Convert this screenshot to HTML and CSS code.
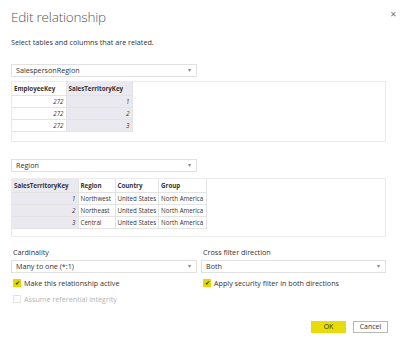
FILE: index.html
```html
<!DOCTYPE html>
<html>
<head lang="en">
    <meta charset="UTF-8">
    <title>Edit relationship</title>
    <link rel="stylesheet" href="styles.css">
</head>
<body>

<div class="dialog">
    <a class="close-btn" href="javascript:void(0);">&#x2715;</a>

    <h1 class="dialog-title">Edit relationship</h1>
    <p class="dialog-sub">Select tables and columns that are related.</p>

    <!--第一个表-->
    <div class="select select-half first-select">
        <span>SalespersonRegion</span><span class="arrow">&#x25BE;</span>
    </div>
    <div class="grid-box box-one">
        <table class="grid">
            <tr>
                <th class="w-emp">EmployeeKey</th>
                <th class="w-key picked">SalesTerritoryKey</th>
            </tr>
            <tr><td class="num">272</td><td class="num picked">1</td></tr>
            <tr><td class="num">272</td><td class="num picked">2</td></tr>
            <tr><td class="num">272</td><td class="num picked">3</td></tr>
        </table>
    </div>

    <!--第二个表-->
    <div class="select select-half second-select">
        <span>Region</span><span class="arrow">&#x25BE;</span>
    </div>
    <div class="grid-box box-two">
        <table class="grid">
            <tr>
                <th class="w-key2 picked">SalesTerritoryKey</th>
                <th class="w-region">Region</th>
                <th class="w-country">Country</th>
                <th class="w-group">Group</th>
            </tr>
            <tr><td class="num picked">1</td><td>Northwest</td><td>United States</td><td>North America</td></tr>
            <tr><td class="num picked">2</td><td>Northeast</td><td>United States</td><td>North America</td></tr>
            <tr><td class="num picked">3</td><td>Central</td><td>United States</td><td>North America</td></tr>
        </table>
    </div>

    <!--选项-->
    <div class="options">
        <div class="opt-col">
            <label class="opt-label">Cardinality</label>
            <div class="select">
                <span>Many to one (*:1)</span><span class="arrow">&#x25BE;</span>
            </div>
            <div class="check-row">
                <span class="check on">&#x2714;</span>Make this relationship active
            </div>
            <div class="check-row disabled">
                <span class="check"></span>Assume referential integrity
            </div>
        </div>
        <div class="opt-col">
            <label class="opt-label">Cross filter direction</label>
            <div class="select">
                <span>Both</span><span class="arrow">&#x25BE;</span>
            </div>
            <div class="check-row">
                <span class="check on">&#x2714;</span>Apply security filter in both directions
            </div>
        </div>
    </div>

    <div class="buttons">
        <a class="btn btn-ok" href="javascript:void(0);">OK</a>
        <a class="btn btn-cancel" href="javascript:void(0);">Cancel</a>
    </div>
</div>

</body>
</html>
```

FILE: styles.css
```css
* {
    padding: 0px;
    margin: 0px;
    box-sizing: border-box;
}

body {
    background: #ffffff;
    font-family: "Open Sans", "Noto Sans", sans-serif;
    font-size: 7.2px;
    color: #333333;
}

a {
    text-decoration: none;
    color: #333333;
}

.dialog {
    position: relative;
    width: 400px;
    height: 347px;
    padding: 0px 14px 0px 11px;
}

.close-btn {
    position: absolute;
    top: 2px;
    right: 3px;
    font-size: 8px;
    color: #777777;
}

.dialog-title {
    margin-top: 6px;
    height: 22px;
    line-height: 22px;
    font-size: 13.5px;
    font-weight: 300;
    letter-spacing: -0.2px;
    color: #555555;
}

.dialog-sub {
    margin-top: 9px;
    height: 10px;
    line-height: 10px;
}

.select {
    display: flex;
    justify-content: space-between;
    align-items: center;
    height: 13px;
    padding: 0px 5px 0px 4px;
    border: #e1e1e1 1px solid;
    background: #ffffff;
    line-height: 11px;
}

.select-half {
    width: 186px;
}

.arrow {
    font-size: 6px;
    color: #888888;
}

.first-select {
    margin-top: 17px;
}

.second-select {
    margin-top: 17px;
}

.grid-box {
    margin-top: 4px;
    border: #ebebeb 1px solid;
    height: 61px;
}

.box-two {
    margin-top: 6px;
    height: 59px;
}

.grid {
    border-collapse: collapse;
    table-layout: fixed;
    font-size: 6.2px;
}

.grid th {
    height: 13px;
    padding: 0px 2px;
    text-align: left;
    font-weight: bold;
    border-right: #e3e3e3 1px solid;
    white-space: nowrap;
}

.grid td {
    height: 12px;
    padding: 0px 2px;
    border: #e3e3e3 1px solid;
    border-left: none;
    white-space: nowrap;
    overflow: hidden;
}

.grid td.num {
    text-align: right;
    font-style: italic;
}

.grid .picked {
    background: #ebe9f0;
}

.w-emp {
    width: 54px;
}

.w-key {
    width: 66px;
}

.w-key2 {
    width: 66px;
}

.w-region {
    width: 37px;
}

.w-country {
    width: 42px;
}

.w-group {
    width: 48px;
}

.options {
    display: flex;
    gap: 4px;
    margin-top: 10px;
}

.opt-col {
    width: 186px;
}

.opt-col:last-child {
    width: 185px;
}

.opt-label {
    display: block;
    height: 10px;
    line-height: 10px;
    padding-left: 2px;
    margin-bottom: 3px;
}

.check-row {
    display: flex;
    align-items: center;
    gap: 3px;
    height: 10px;
    margin-top: 5px;
    padding-left: 2px;
}

.check-row + .check-row {
    margin-top: 6px;
}

.check {
    display: flex;
    align-items: center;
    justify-content: center;
    width: 8px;
    height: 8px;
    border: #d6d6d6 1px solid;
    font-size: 6px;
    color: #222222;
}

.check.on {
    background: #e6d800;
    border-color: #e6d800;
}

.disabled {
    color: #b4b4b4;
}

.disabled .check {
    border-color: #e4e4e4;
}

.buttons {
    display: flex;
    justify-content: flex-end;
    gap: 7px;
    margin-top: 17px;
    margin-right: -2px;
}

.btn {
    display: block;
    width: 35px;
    height: 12px;
    line-height: 12px;
    text-align: center;
    font-size: 7px;
}

.btn-ok {
    background: #e6dc0a;
}

.btn-cancel {
    border: #b8b8b8 1px solid;
    line-height: 10px;
}
```
